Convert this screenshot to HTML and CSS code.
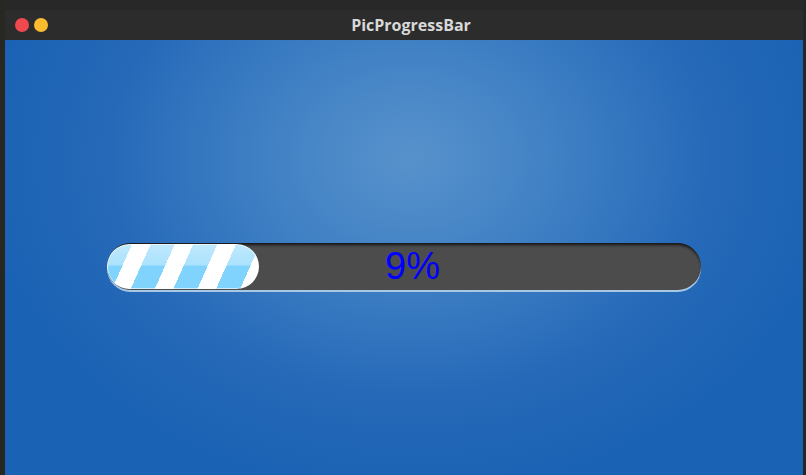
FILE: index.html
```html
<!DOCTYPE html>
<html>
<head>
<meta charset="utf-8">
<link rel="stylesheet" href="styles.css">
</head>
<body>
<div class="desk">
  <div class="gutter"></div>
  <div class="window">
    <div class="titlebar">
      <div class="buttons">
        <span class="dot close"></span>
        <span class="dot min"></span>
      </div>
      <div class="title">PicProgressBar</div>
    </div>
    <div class="content">
      <div class="track">
        <div class="fill"></div>
        <div class="label">9%</div>
      </div>
    </div>
  </div>
  <div class="gutter-r"></div>
</div>
</body>
</html>
```
FILE: styles.css
```css
html, body {
  margin: 0;
  padding: 0;
  width: 806px;
  height: 475px;
  overflow: hidden;
  background: #262626;
}
.desk {
  display: flex;
  width: 806px;
  height: 475px;
}
.gutter {
  width: 5px;
  background: #272822;
}
.gutter-r {
  width: 3px;
  background: #262626;
}
.window {
  flex: 1;
  display: flex;
  flex-direction: column;
  padding-top: 10px;
  background: #282828;
}
.titlebar {
  height: 30px;
  background: #2c2c2c;
  display: flex;
  align-items: center;
  justify-content: center;
  position: relative;
}
.buttons {
  position: absolute;
  left: 10px;
  top: 8px;
  display: flex;
  gap: 5px;
}
.dot {
  width: 14px;
  height: 14px;
  border-radius: 50%;
  display: block;
}
.close { background: #f0484f; }
.min { background: #fbbd2e; }
.title {
  font-family: "Open Sans", "DejaVu Sans", sans-serif;
  font-weight: 700;
  font-size: 16px;
  color: #d8d8d8;
  padding-left: 14px;
}
.content {
  flex: 1;
  background: radial-gradient(ellipse 430px 340px at 405px 118px, #5892cc 0%, #3f80c4 35%, #2669b8 70%, #1a62b4 100%);
  padding-top: 203px;
  padding-left: 102px;
}
.track {
  width: 594px;
  height: 47px;
  border-radius: 24px;
  background: #4c4c4c;
  box-shadow: inset 0 3px 3px -1px #141414, 0 2px 0 0 #a9c8e6;
  position: relative;
  display: flex;
  align-items: center;
}
.fill {
  width: 152px;
  height: 45px;
  margin-top: -1px;
  border-radius: 23px;
  background:
    linear-gradient(to bottom, rgba(255,255,255,0.5) 0%, rgba(255,255,255,0.35) 46%, rgba(255,255,255,0) 50%),
    repeating-linear-gradient(114deg, #7fd3fc 0px, #7fd3fc 22px, #ffffff 22px, #ffffff 39px);
  background-position: 0 0, 1px 0;
  box-shadow: inset 0 0 0 1px rgba(255,255,255,0.6);
}
.label {
  position: absolute;
  left: 278px;
  top: 0;
  height: 47px;
  line-height: 47px;
  font-family: "Liberation Sans", Arial, sans-serif;
  font-size: 38px;
  color: #0000ff;
}
```
